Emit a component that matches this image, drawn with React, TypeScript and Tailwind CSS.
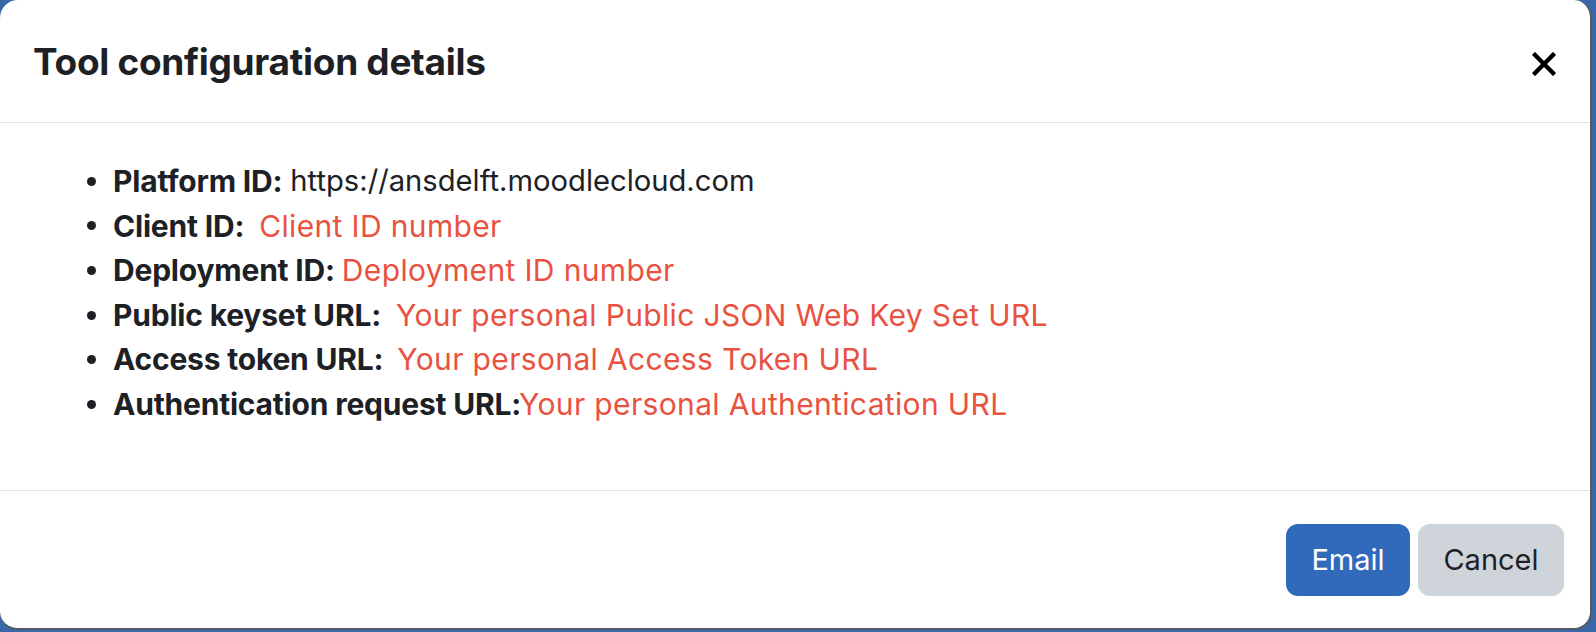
import React from "react";

type Row = {
  label: string;
  value: string;
  gap: string;
  red: boolean;
};

const rows: Row[] = [
  { label: "Platform ID:", value: "https://ansdelft.moodlecloud.com", gap: "ml-[8px]", red: false },
  { label: "Client ID:", value: "Client ID number", gap: "ml-[15px]", red: true },
  { label: "Deployment ID:", value: "Deployment ID number", gap: "ml-[7px]", red: true },
  { label: "Public keyset URL:", value: "Your personal Public JSON Web Key Set URL", gap: "ml-[15px]", red: true },
  { label: "Access token URL:", value: "Your personal Access Token URL", gap: "ml-[14px]", red: true },
  { label: "Authentication request URL:", value: "Your personal Authentication URL", gap: "-ml-[2px]", red: true },
];

export default function App() {
  return (
    <div
      className="w-[1596px] h-[632px] bg-[#3a67a8] overflow-hidden"
      style={{ fontFamily: "Inter, 'Noto Sans', sans-serif" }}
    >
      <div className="w-[1592px] h-[630px] bg-white rounded-[18px] border-b-2 border-r-2 border-[#555b63] flex flex-col text-[#1d2125]">
        {/* header */}
        <div className="h-[123px] border-b border-[#dee2e6] flex items-center justify-between pl-[33px] pr-[33px] shrink-0">
          <h1 className="text-[37px] font-bold tracking-[-0.3px] leading-none">
            Tool configuration details
          </h1>
          <button className="w-[26px] h-[26px] mt-[6px] flex items-center justify-center">
            <svg width="24" height="24" viewBox="0 0 24 24">
              <path d="M3 3 L21 21 M21 3 L3 21" stroke="#000" strokeWidth="4.4" strokeLinecap="square" />
            </svg>
          </button>
        </div>

        {/* body */}
        <div className="h-[368px] border-b border-[#dee2e6] pt-[36px] pl-[87px] shrink-0">
          <ul className="text-[30px] leading-[44.6px]">
            {rows.map((r) => (
              <li key={r.label} className="flex items-center">
                <span className="w-[9px] h-[9px] rounded-full bg-[#1d2125] mr-[17px] shrink-0" />
                <span className="font-bold tracking-[-0.2px]">{r.label}</span>
                <span
                  className={`${r.gap} ${
                    r.red ? "text-[#e8523f] bg-white tracking-[0.35px]" : "text-[#1d2125] text-[29.2px]"
                  }`}
                >
                  {r.value}
                </span>
              </li>
            ))}
          </ul>
        </div>

        {/* footer */}
        <div className="flex-1 flex justify-end items-start pt-[33px] pr-[26px] gap-[8px]">
          <button className="h-[72px] w-[124px] rounded-[12px] bg-[#316abb] text-white text-[29px]">
            Email
          </button>
          <button className="h-[72px] w-[146px] rounded-[12px] bg-[#ced4da] text-[#1d2125] text-[29px]">
            Cancel
          </button>
        </div>
      </div>
    </div>
  );
}
